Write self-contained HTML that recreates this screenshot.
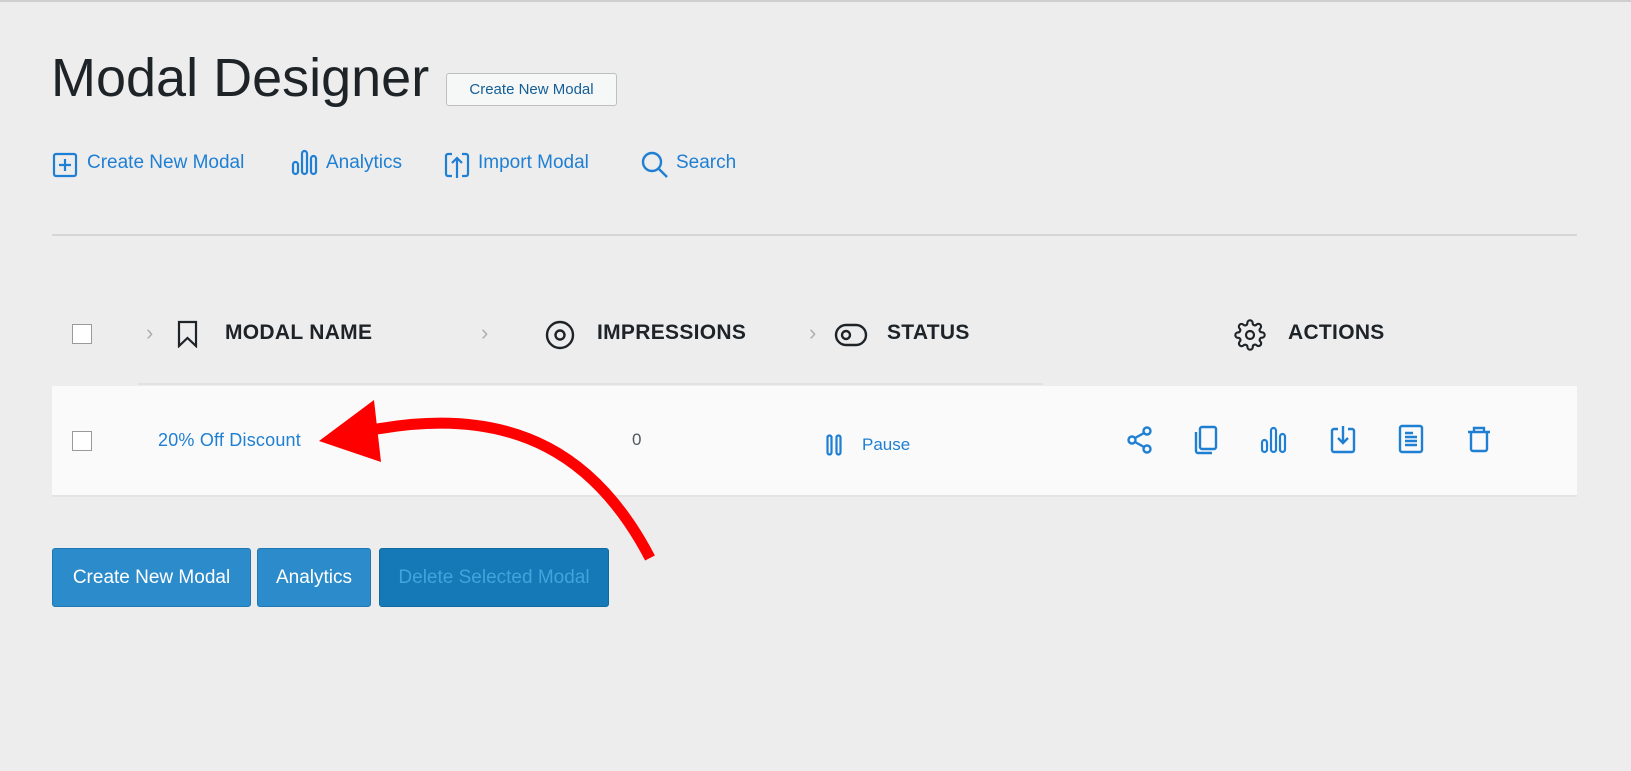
<!DOCTYPE html>
<html><head><meta charset="utf-8"><style>
body{margin:0;width:1631px;height:769px;background:#ededed;font-family:"Liberation Sans",sans-serif;position:relative;overflow:hidden;border-top:2px solid #cfcfcf;box-sizing:border-box}
.a{position:absolute}
.blue{color:#1e7fd3}
.nav{font-size:19px;color:#1e7fd3;top:150px}
.hd{font-weight:bold;font-size:21px;color:#1d2327;top:319px;letter-spacing:.3px}
.chev{color:#b0b0b0;font-size:22px;top:318px}
.cb{width:20px;height:20px;border:1px solid #9a9a9a;background:#fff;box-sizing:border-box}
.btn{top:546px;height:59px;border-radius:3px;color:#fff;font-size:19px;display:flex;align-items:center;justify-content:center;background:#2b8bcb;border:1px solid #1f78b4;box-sizing:border-box}
svg{position:absolute}
</style></head><body>
<div class="a" style="left:51px;top:45px;font-size:54px;color:#1d2327">Modal Designer</div>
<div class="a" style="left:446px;top:71px;width:171px;height:33px;border:1px solid #bfbfbf;background:#f6f7f7;border-radius:3px;box-sizing:border-box;font-size:15px;color:#135e96;display:flex;align-items:center;justify-content:center">Create New Modal</div>

<svg style="left:52px;top:150px" width="26" height="26" viewBox="0 0 26 26" fill="none" stroke="#1e7fd3" stroke-width="2.2"><rect x="2" y="2" width="22" height="22" rx="2"/><path d="M13 7v12M7 13h12"/></svg>
<div class="a nav" style="left:87px">Create New Modal</div>
<svg style="left:291px;top:146px" width="28" height="28" viewBox="0 0 28 28" fill="none" stroke="#1e7fd3" stroke-width="2.2"><rect x="2" y="14" width="5" height="12" rx="2.5"/><rect x="11" y="3" width="5" height="23" rx="2.5"/><rect x="20" y="8" width="5" height="18" rx="2.5"/></svg>
<div class="a nav" style="left:326px">Analytics</div>
<svg style="left:444px;top:148px" width="26" height="30" viewBox="0 0 26 30" fill="none" stroke="#1e7fd3" stroke-width="2.2"><path d="M8 4H4a2 2 0 0 0-2 2v18a2 2 0 0 0 2 2h4M18 4h4a2 2 0 0 1 2 2v18a2 2 0 0 1-2 2h-4"/><path d="M13 28V8M8 13l5-5 5 5"/></svg>
<div class="a nav" style="left:478px">Import Modal</div>
<svg style="left:640px;top:148px" width="30" height="30" viewBox="0 0 30 30" fill="none" stroke="#1e7fd3" stroke-width="2.4"><circle cx="12" cy="12" r="9"/><path d="M19 19l8 8"/></svg>
<div class="a nav" style="left:676px">Search</div>

<div class="a" style="left:52px;top:232px;width:1525px;height:2px;background:#d6d6d6"></div>

<div class="a cb" style="left:72px;top:322px"></div>
<div class="a chev" style="left:146px">›</div>
<svg style="left:176px;top:318px" width="24" height="28" viewBox="0 0 24 28" fill="none" stroke="#1d2327" stroke-width="2.2"><path d="M3 2h17v24l-8.5-8L3 26z"/></svg>
<div class="a hd" style="left:225px">MODAL NAME</div>
<div class="a chev" style="left:481px">›</div>
<svg style="left:545px;top:318px" width="30" height="30" viewBox="0 0 30 30" fill="none" stroke="#1d2327" stroke-width="2.4"><circle cx="15" cy="15" r="13"/><circle cx="15" cy="15" r="4.5"/></svg>
<div class="a hd" style="left:597px">IMPRESSIONS</div>
<div class="a chev" style="left:809px">›</div>
<svg style="left:834px;top:321px" width="34" height="24" viewBox="0 0 34 24" fill="none" stroke="#1d2327" stroke-width="2.4"><rect x="2" y="2" width="30" height="20" rx="10"/><circle cx="12" cy="12" r="4"/></svg>
<div class="a hd" style="left:887px">STATUS</div>
<svg style="left:1234px;top:317px" width="32" height="32" viewBox="0 0 24 24" fill="none" stroke="#1d2327" stroke-width="1.6"><circle cx="12" cy="12" r="3"/><path d="M19.4 15a1.65 1.65 0 0 0 .33 1.820l.06.06a2 2 0 1 1-2.83 2.83l-.06-.06a1.65 1.65 0 0 0-1.820-.33 1.65 1.65 0 0 0-1 1.51V21a2 2 0 1 1-4 0v-.09A1.650 1.650 0 0 0 9 19.4a1.65 1.65 0 0 0-1.82.33l-.06.06a2 2 0 1 1-2.83-2.83l.06-.06a1.65 1.65 0 0 0 .33-1.82 1.65 1.65 0 0 0-1.51-1H3a2 2 0 1 1 0-4h.09A1.65 1.65 0 0 0 4.6 9a1.65 1.65 0 0 0-.33-1.82l-.06-.06a2 2 0 1 1 2.83-2.83l.06.06a1.65 1.65 0 0 0 1.82.33H9a1.65 1.65 0 0 0 1-1.51V3a2 2 0 1 1 4 0v.09a1.65 1.65 0 0 0 1 1.51 1.65 1.65 0 0 0 1.82-.33l.06-.06a2 2 0 1 1 2.83 2.83l-.06.06a1.65 1.65 0 0 0-.33 1.82V9a1.65 1.65 0 0 0 1.51 1H21a2 2 0 1 1 0 4h-.09a1.65 1.65 0 0 0-1.51 1z"/></svg>
<div class="a hd" style="left:1288px">ACTIONS</div>

<div class="a" style="left:138px;top:381px;width:905px;height:2px;background:#e2e2e2"></div>
<div class="a" style="left:52px;top:384px;width:1525px;height:109px;background:#fafafa;border-bottom:2px solid #e4e4e4"></div>
<div class="a cb" style="left:72px;top:429px"></div>
<div class="a blue" style="left:158px;top:428px;font-size:18px;letter-spacing:.2px">20% Off Discount</div>
<div class="a" style="left:632px;top:428px;font-size:17px;color:#50575e">0</div>
<svg style="left:826px;top:432px" width="16" height="22" viewBox="0 0 16 22" fill="none" stroke="#1e7fd3" stroke-width="2.2"><rect x="1.5" y="1.5" width="4" height="19" rx="2"/><rect x="10.5" y="1.5" width="4" height="19" rx="2"/></svg>
<div class="a blue" style="left:862px;top:433px;font-size:17px">Pause</div>

<svg style="left:1127px;top:424px" width="26" height="28" viewBox="0 0 26 28" fill="none" stroke="#1e7fd3" stroke-width="2.4"><circle cx="5" cy="14" r="3.5"/><circle cx="20" cy="5" r="3.5"/><circle cx="20" cy="23" r="3.5"/><path d="M8 12l9-5M8 16l9 5"/></svg>
<svg style="left:1193px;top:423px" width="26" height="30" viewBox="0 0 26 30" fill="none" stroke="#1e7fd3" stroke-width="2.4"><path d="M3 7v19a2 2 0 0 0 2 2h14"/><rect x="7" y="2" width="16" height="22" rx="2"/></svg>
<svg style="left:1260px;top:423px" width="28" height="30" viewBox="0 0 28 30" fill="none" stroke="#1e7fd3" stroke-width="2.2"><rect x="2" y="15" width="5" height="12" rx="2.5"/><rect x="11" y="3" width="5" height="24" rx="2.5"/><rect x="20" y="9" width="5" height="18" rx="2.5"/></svg>
<svg style="left:1330px;top:422px" width="26" height="30" viewBox="0 0 26 30" fill="none" stroke="#1e7fd3" stroke-width="2.4"><path d="M8 5H4a2 2 0 0 0-2 2v19a2 2 0 0 0 2 2h18a2 2 0 0 0 2-2V7a2 2 0 0 0-2-2h-4"/><path d="M13 2v17M8 14l5 5 5-5"/></svg>
<svg style="left:1398px;top:422px" width="26" height="30" viewBox="0 0 26 30" fill="none" stroke="#1e7fd3" stroke-width="2.4"><rect x="2" y="2" width="22" height="26" rx="2"/><path d="M7 9h8M7 13h12M7 17h12M7 21h12"/></svg>
<svg style="left:1467px;top:423px" width="24" height="28" viewBox="0 0 24 28" fill="none" stroke="#1e7fd3" stroke-width="2.4"><path d="M1 7h22M7 7V3h10v4M4 7v17a2 2 0 0 0 2 2h12a2 2 0 0 0 2-2V7"/></svg>

<div class="a btn" style="left:52px;width:199px">Create New Modal</div>
<div class="a btn" style="left:257px;width:114px">Analytics</div>
<div class="a btn" style="left:379px;width:230px;background:#1479b6;border-color:#106a9f;color:#3ea6dc">Delete Selected Modal</div>

<svg style="left:0;top:0" width="1631" height="769" viewBox="0 0 1631 769" fill="none">
<path d="M650 556 C600 460 520 400 372 428" stroke="#ff0000" stroke-width="11"/>
<path d="M319 439 L374 398 L381 460 Z" fill="#ff0000"/>
</svg>
</body></html>
